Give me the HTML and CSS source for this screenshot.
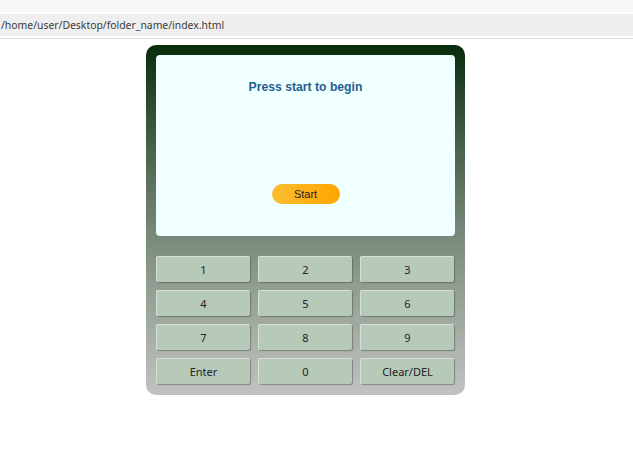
FILE: index.html
```html
<!DOCTYPE html>
<html>
<head>
<meta charset="utf-8">
<link rel="stylesheet" href="styles.css">
</head>
<body>
<div class="chrome">
  <div class="chrome-top"></div>
  <div class="address">/home/user/Desktop/folder_name/index.html</div>
</div>
<main class="page">
  <div class="calc">
    <div class="screen">
      <h1 class="prompt">Press start to begin</h1>
      <button class="start">Start</button>
    </div>
    <div class="keypad">
      <button class="key">1</button>
      <button class="key">2</button>
      <button class="key">3</button>
      <button class="key">4</button>
      <button class="key">5</button>
      <button class="key">6</button>
      <button class="key">7</button>
      <button class="key">8</button>
      <button class="key">9</button>
      <button class="key">Enter</button>
      <button class="key">0</button>
      <button class="key">Clear/DEL</button>
    </div>
  </div>
</main>
</body>
</html>
```

FILE: styles.css
```css
html, body {
  margin: 0;
  padding: 0;
  background: #ffffff;
}
.chrome {
  border-bottom: 1px solid #dcdcdc;
  padding-bottom: 2px;
  background: #ffffff;
}
.chrome-top {
  height: 12px;
  background: #f8f8f8;
  margin-bottom: 2px;
}
.address {
  height: 22px;
  line-height: 22px;
  background: #efefef;
  font-family: "Noto Sans", "DejaVu Sans", sans-serif;
  font-size: 10.4px;
  color: #3a3a3a;
  padding-left: 1px;
  white-space: nowrap;
}
.page {
  padding-top: 6px;
  padding-left: 146px;
}
.calc {
  width: 299px;
  padding: 10px 10px 11px 10px;
  border-radius: 10px;
  background: linear-gradient(to bottom, #082c0c 0%, #4a634c 30%, #7b8c7c 56%, #9aa59a 75%, #c2c2c2 100%);
}
.screen {
  height: 181px;
  background: #f0ffff;
  border-radius: 4px;
  display: flex;
  flex-direction: column;
  align-items: center;
}
.prompt {
  margin: 25px 0 0 0;
  font-family: "Liberation Sans", Arial, sans-serif;
  font-weight: bold;
  font-size: 12.2px;
  color: #1f5f8e;
}
.start {
  margin-top: 90px;
  width: 68px;
  height: 20px;
  border: none;
  border-radius: 10px;
  background: linear-gradient(to right, #fbbd2e, #ffa500);
  font-family: "Liberation Sans", Arial, sans-serif;
  font-size: 11px;
  color: #1e1e1e;
  padding: 0;
}
.keypad {
  margin-top: 20px;
  display: grid;
  grid-template-columns: repeat(3, 94px);
  column-gap: 8px;
  row-gap: 8px;
}
.key {
  height: 26px;
  padding: 0;
  background: #b7cab9;
  border: none;
  border-top: 1px solid #d6e2d6;
  border-left: 1px solid #d6e2d6;
  border-radius: 2px;
  box-shadow: 1px 1px 1px rgba(60, 70, 60, 0.45);
  font-family: "Noto Sans", "DejaVu Sans", sans-serif;
  font-size: 11px;
  color: #222222;
}
```
